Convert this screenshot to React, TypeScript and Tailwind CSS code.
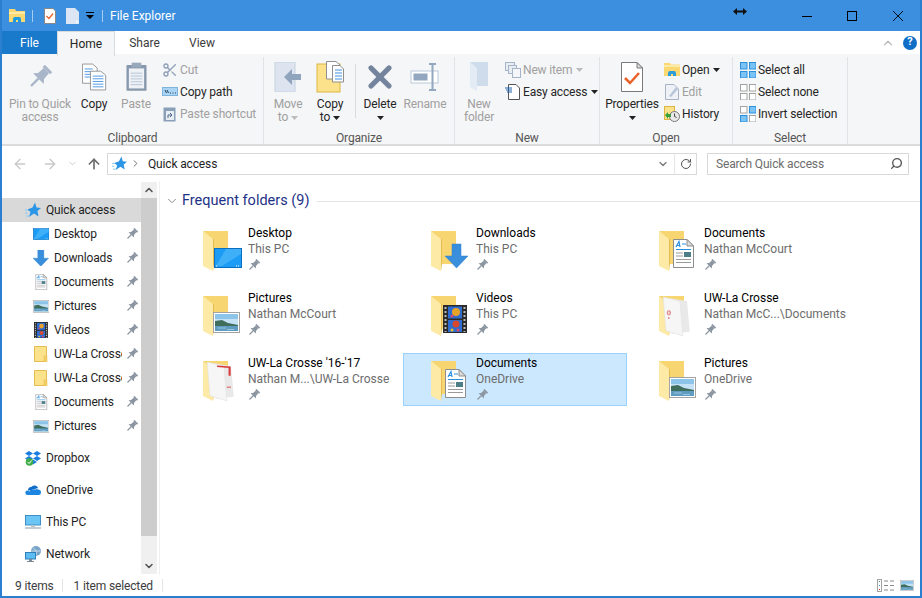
import { ArrowLeft, ArrowRight, ArrowUp, ChevronDown, ChevronUp, ChevronRight, RotateCw, Search, Scissors, X } from "lucide-react";
import type { ReactNode } from "react";

const Caret = ({ color = "#222" }: { color?: string }) => (
  <svg width="7" height="4" viewBox="0 0 7 4" className="inline-block shrink-0">
    <polygon points="0,0 7,0 3.5,4" fill={color} />
  </svg>
);

const Pin = ({ size = 12, color = "#8b96a1" }: { size?: number; color?: string }) => (
  <svg width={size} height={size} viewBox="0 0 16 16" className="shrink-0">
    <g transform="rotate(45 8 8)" fill={color}>
      <rect x="4.5" y="0" width="7" height="2" />
      <polygon points="5.6,2 10.4,2 10.8,7 13,9.5 3,9.5 5.2,7" />
      <rect x="7.2" y="9.5" width="1.6" height="7" />
    </g>
  </svg>
);

const Star = ({ size = 16 }: { size?: number }) => (
  <svg width={size} height={size} viewBox="0 0 16 16" className="shrink-0">
    <polygon points="10,0.5 11.5,5.5 16,6 12.5,9 13.5,14.5 9,11.5 4,15 5.5,10 2.5,7.5 7.5,5.5" fill="#2b95e6" />
    <path d="M0 8h3M0 11h2.5M1 14h3" stroke="#8cc8f2" strokeWidth="1" />
  </svg>
);

const DesktopGlyph = () => (
  <g>
    <rect x="0.5" y="0.5" width="27" height="19" fill="#1c9cf4" stroke="#0a6fc0" />
    <polygon points="12,1 27,1 27,6 8,18 2,18" fill="#3fb0f8" />
    <path d="M2 18h2M22 18h4" stroke="#fff" strokeWidth="1" strokeDasharray="1 1" />
  </g>
);

const ArrowGlyph = () => (
  <polygon points="7,0 16,0 16,12 23,12 11.5,24 0,12 7,12" fill="#3a8fdc" stroke="#2f7fca" strokeWidth="0.5" />
);

const PictureGlyph = () => (
  <g>
    <rect x="0.5" y="0.5" width="26" height="20" fill="#fff" stroke="#a3a3a3" />
    <rect x="2" y="2" width="23" height="17" fill="#c4e1f5" />
    <rect x="2" y="2" width="23" height="5" fill="#8cc4ea" />
    <path d="M2 9 L9 8 L15 11 L25 13 V15 H2Z" fill="#3f6e5c" />
    <rect x="2" y="14" width="23" height="5" fill="#5f9cc2" />
    <path d="M5 16h8M14 17.500h7" stroke="#a9cfe6" strokeWidth="0.8" />
  </g>
);

const VideoGlyph = () => (
  <g>
    <rect x="0" y="0" width="24" height="28" fill="#2a2a2a" />
    <rect x="5" y="1.5" width="14" height="12" fill="#2e6cd0" />
    <rect x="5" y="15" width="14" height="12" fill="#2e6cd0" />
    <circle cx="13" cy="7" r="4" fill="#e8a228" />
    <circle cx="9" cy="11" r="1.5" fill="#d9476a" />
    <circle cx="13" cy="19" r="3.5" fill="#d9472c" />
    <circle cx="9" cy="25" r="1.5" fill="#e8c028" />
    <circle cx="15" cy="25" r="1.5" fill="#d9476a" />
    <path d="M2.5 2v25M21.5 2v25" stroke="#bbb" strokeWidth="2" strokeDasharray="2 2" />
  </g>
);

const DocGlyph = () => (
  <g>
    <polygon points="0.5,0.5 14,0.5 20.5,7 20.5,28.5 0.5,28.5" fill="#fff" stroke="#8d8d8d" />
    <polygon points="14,0.5 14,7 20.5,7" fill="#dcdcdc" stroke="#8d8d8d" />
    <path d="M3 8 L6 2.5 L7 8 M3.5 6.500 h3" stroke="#2a8fe0" strokeWidth="1.2" fill="none" />
    <path d="M9 5h4M3 10.5h15" stroke="#2a8fe0" strokeWidth="1" />
    <path d="M3 14h7M3 17h7M3 20.5h15M3 23.5h15" stroke="#9a9a9a" strokeWidth="1" />
    <rect x="11" y="13" width="7" height="5" fill="#4d7d86" />
  </g>
);

const PaperGlyph = ({ faded = false }: { faded?: boolean }) => (
  <g transform="scale(1.4 1.05)">
    <polygon points="7,2 20,5 22,34 9,36" fill="#e9e9e9" />
    <polygon points="3,1 15,5 17,38 5,33" fill="#f6f6f6" stroke="#e2e2e2" strokeWidth="0.5" />
    {faded ? (
      <path d="M7 18 a1 2 0 1 1 0.1 0 M7 20v2" stroke="#e08a8a" strokeWidth="1" fill="none" />
    ) : (
      <>
        <path d="M10 5 L19 6 L19 14" stroke="#d83b3b" strokeWidth="1.5" fill="none" />
        <path d="M17 25h3" stroke="#e08a8a" strokeWidth="1.5" />
      </>
    )}
  </g>
);

// folder with the overlay that Explorer puts over it
const Folder = ({ children }: { children?: ReactNode }) => (
  <svg width="45" height="42" viewBox="0 0 45 42" className="shrink-0">
    <rect x="0" y="0" width="25" height="33" fill="#f7d672" />
    <polygon points="0,0 10,8 10,40 0,35" fill="#fdeaa6" />
    <polygon points="10,8 11,8 11,33 10,40" fill="#e5bb52" />
    {children}
  </svg>
);

const tiles: { name: string; sub: string; overlay: ReactNode; selected?: boolean }[] = [
  { name: "Desktop", sub: "This PC", overlay: <g transform="translate(11 17)"><DesktopGlyph /></g> },
  { name: "Downloads", sub: "This PC", overlay: <g transform="translate(14 13)"><ArrowGlyph /></g> },
  { name: "Documents", sub: "Nathan McCourt", overlay: <g transform="translate(14 8)"><DocGlyph /></g> },
  { name: "Pictures", sub: "Nathan McCourt", overlay: <g transform="translate(10 16)"><PictureGlyph /></g> },
  { name: "Videos", sub: "This PC", overlay: <g transform="translate(12 9)"><VideoGlyph /></g> },
  { name: "UW-La Crosse", sub: "Nathan McC...\\Documents", overlay: <PaperGlyph faded /> },
  { name: "UW-La Crosse '16-'17", sub: "Nathan M...\\UW-La Crosse", overlay: <PaperGlyph /> },
  { name: "Documents", sub: "OneDrive", overlay: <g transform="translate(14 8)"><DocGlyph /></g>, selected: true },
  { name: "Pictures", sub: "OneDrive", overlay: <g transform="translate(10 16)"><PictureGlyph /></g> },
];

const SmallIcon = ({ children }: { children: ReactNode }) => (
  <svg width="16" height="16" viewBox="0 0 16 16" className="shrink-0">
    {children}
  </svg>
);

const Note = () => (
  <SmallIcon>
    <polygon points="1.5,0.5 13.5,0.5 13.5,15.5 1.5,15.5" fill="#fde28c" stroke="#e3bd52" />
    <rect x="11" y="10" width="3" height="6" fill="#f3cf66" stroke="#e3bd52" strokeWidth="0.5" />
  </SmallIcon>
);

const navPinned: { name: string; icon: ReactNode }[] = [
  { name: "Desktop", icon: <SmallIcon><g transform="scale(0.58) translate(0 4)"><DesktopGlyph /></g></SmallIcon> },
  { name: "Downloads", icon: <SmallIcon><g transform="scale(0.68)"><ArrowGlyph /></g></SmallIcon> },
  { name: "Documents", icon: <SmallIcon><g transform="translate(2.5 0) scale(0.55)"><DocGlyph /></g></SmallIcon> },
  { name: "Pictures", icon: <SmallIcon><g transform="translate(0 2) scale(0.6)"><PictureGlyph /></g></SmallIcon> },
  { name: "Videos", icon: <SmallIcon><g transform="translate(1 0) scale(0.58)"><VideoGlyph /></g></SmallIcon> },
  { name: "UW-La Crosse", icon: <Note /> },
  { name: "UW-La Crosse", icon: <Note /> },
  { name: "Documents", icon: <SmallIcon><g transform="translate(2.5 0) scale(0.55)"><DocGlyph /></g></SmallIcon> },
  { name: "Pictures", icon: <SmallIcon><g transform="translate(0 2) scale(0.6)"><PictureGlyph /></g></SmallIcon> },
];

const navRoots: { name: string; icon: ReactNode }[] = [
  {
    name: "Dropbox",
    icon: (
      <SmallIcon>
        <path d="M4 1L8 3.5L4 6L0 3.5ZM12 1L16 3.5L12 6L8 3.5ZM4 6L8 8.5L4 11L0 8.5ZM12 6L16 8.5L12 11L8 8.5ZM8 9.5L12 12L8 14.5L4 12Z" fill="#1b7de0" />
        <circle cx="4.5" cy="12" r="3.8" fill="#3fae49" />
        <path d="M2.6 12l1.5 1.5 2.5-3" stroke="#fff" strokeWidth="1" fill="none" />
      </SmallIcon>
    ),
  },
  {
    name: "OneDrive",
    icon: (
      <SmallIcon>
        <path d="M3 8.5a3 3 0 0 1 3.2-3.4A4 4 0 0 1 13.3 6.5 2.8 2.8 0 0 0 10 7.5 3 3 0 0 0 6 9.5 2.6 2.6 0 0 0 3 8.5Z" fill="#0f6cc8" />
        <path d="M2.5 13a2.2 2.2 0 0 1 0-4.4c.9 0 1.8.3 2.6 1A3 3 0 0 1 10 8a2.5 2.5 0 0 1 3-.6 2.8 2.8 0 0 1 3 3A2.6 2.6 0 0 1 13.500 13Z" fill="#1c86e0" />
      </SmallIcon>
    ),
  },
  {
    name: "This PC",
    icon: (
      <SmallIcon>
        <rect x="0.500" y="1.500" width="15" height="9.500" fill="#6cc6f5" stroke="#3f8fc7" />
        <rect x="6" y="11" width="4" height="2" fill="#b9c4cc" />
        <rect x="0" y="13" width="16" height="2" fill="#c2ccd2" />
      </SmallIcon>
    ),
  },
  {
    name: "Network",
    icon: (
      <SmallIcon>
        <circle cx="11" cy="5" r="5" fill="#7aa5c9" />
        <path d="M8 2c2 1 4 3 3 7M6.500 5h9" stroke="#dbe9f3" strokeWidth="0.8" fill="none" />
        <rect x="0.500" y="6.500" width="10" height="6.500" fill="#5dbcf2" stroke="#2f7fb8" />
        <rect x="4" y="13" width="3" height="2" fill="#7c8b95" />
        <rect x="2" y="15" width="7" height="1" fill="#7c8b95" />
      </SmallIcon>
    ),
  },
];

const Large = ({ w, lines, icon, disabled = false, caret = false }: { w: number; lines: string[]; icon: ReactNode; disabled?: boolean; caret?: boolean }) => (
  <div style={{ width: w }} className={`flex flex-col items-center shrink-0 leading-[13px] ${disabled ? "text-[#a0a0a0]" : "text-[#262626]"}`}>
    <div className="h-[39px] pb-[4px] flex items-center justify-center">{icon}</div>
    {lines.map((line, i) => (
      <div key={line} className="whitespace-nowrap h-[13px] flex items-center gap-[3px]">
        {line}
        {caret && i === lines.length - 1 && lines.length > 1 && <Caret color={disabled ? "#bbb" : "#222"} />}
      </div>
    ))}
    {caret && lines.length === 1 && <div className="h-[13px] flex items-center"><Caret /></div>}
  </div>
);

const Small = ({ icon, label, disabled = false, caret = false }: { icon: ReactNode; label: string; disabled?: boolean; caret?: boolean }) => (
  <div className={`h-[22px] flex items-center whitespace-nowrap ${disabled ? "text-[#a0a0a0]" : "text-[#262626]"}`}>
    <span className="w-[18px] shrink-0">{icon}</span>
    {label}
    {caret && <span className="ml-[4px] flex"><Caret color={disabled ? "#bbb" : "#222"} /></span>}
  </div>
);

const Group = ({ w, label, children }: { w: number; label: string; children: ReactNode }) => (
  <div style={{ width: w }} className="h-[88px] shrink-0 border-r border-[#e1e3e6] flex flex-col">
    <div className="flex h-[70px] pt-[2px]">{children}</div>
    <div className="mt-auto h-[16px] leading-[18px] text-center text-[#555]">{label}</div>
  </div>
);

const LargeCopy = () => (
  <svg width="25" height="30" viewBox="0 0 28 30">
    <polygon points="0.5,0.5 12,0.5 17,5 17,22 0.5,22" fill="#fff" stroke="#8f8f8f" />
    <path d="M3 6h9M3 9h11M3 12h11M3 15h11" stroke="#3f8fe0" />
    <polygon points="9.500,8.500 21,8.500 26.500,13 26.500,29.500 9.500,29.500" fill="#fff" stroke="#8f8f8f" />
    <path d="M12 14h12M12 17h12M12 20h12M12 23h12M12 26h12" stroke="#3f8fe0" />
  </svg>
);

const Grid4 = ({ fills, strokes }: { fills: string[]; strokes: string[] }) => (
  <SmallIcon>
    {[[0, 0], [9, 0], [0, 9], [9, 9]].map(([x, y], i) => (
      <rect key={i} x={x + 0.5} y={y + 0.5} width="6.500" height="6.500" fill={fills[i]} stroke={strokes[i]} />
    ))}
  </SmallIcon>
);

const History = () => (
  <SmallIcon>
    <rect x="0.500" y="0.500" width="10" height="13" fill="#fde28c" stroke="#dcb545" />
    <circle cx="10.500" cy="10.500" r="5" fill="#e8e8e8" stroke="#777" />
    <path d="M10.500 7.500v3l2 1" stroke="#444" fill="none" />
    <path d="M1 9l3-3v2h3v3H4v2Z" fill="#3aa13a" />
  </SmallIcon>
);

const OpenFolder = () => (
  <SmallIcon>
    <path d="M0 1h6l1 1.500h9V14H0Z" fill="#fbd970" />
    <rect x="0" y="3" width="16" height="2" fill="#fdeaa6" />
    <path d="M4 14v-3a2 2 0 0 1 2-2h4a2 2 0 0 1 2 2v3h-3v-2H7v2Z" fill="#2d9cdb" />
  </SmallIcon>
);

const Ribbon = () => (
  <div className="h-[92px] bg-[#f5f6f7] border-b-2 border-[#dadbdc] flex pt-[3px] shrink-0 tracking-[-0.15px]">
    <Group w={262} label="Clipboard">
      <div className="w-[3px] shrink-0" />
      <Large w={70} lines={["Pin to Quick", "access"]} disabled icon={<Pin size={24} color="#a9b6ca" />} />
      <Large w={38} lines={["Copy"]} icon={<LargeCopy />} />
      <Large w={46} lines={["Paste"]} disabled icon={
        <svg width="21" height="30" viewBox="0 0 22 30">
          <rect x="0.500" y="2.500" width="21" height="27" rx="1" fill="#8797ad" />
          <rect x="3" y="6" width="16" height="21" fill="#eef1f5" />
          <path d="M5 11h12M5 14h12M5 17h12M5 20h12M5 23h12" stroke="#b6c3d6" />
          <rect x="6" y="0" width="10" height="5" fill="#9aa8bb" />
        </svg>
      } />
      <div className="w-[3px] shrink-0" />
      <div className="flex flex-col">
        <Small disabled label="Cut" icon={<Scissors size={16} color="#8fa0ba" />} />
        <Small label="Copy path" icon={
          <SmallIcon>
            <rect x="0.500" y="3.500" width="15" height="8" fill="#a9d4f3" stroke="#7fb5dc" />
            <path d="M3 6l1.500 3M5 6l1.500 3M8 9h1M10.500 9h1M13 9h1" stroke="#24425e" />
          </SmallIcon>
        } />
        <Small disabled label="Paste shortcut" icon={
          <SmallIcon>
            <rect x="1.500" y="1.500" width="12" height="14" fill="#8aa0b8" />
            <rect x="4" y="5" width="8" height="9" fill="#e8edf3" />
            <path d="M6 12v-3h4M8 7l2 2-2 2" stroke="#4c6888" fill="none" />
          </SmallIcon>
        } />
      </div>
    </Group>
    <Group w={191} label="Organize">
      <div className="w-[6px] shrink-0" />
      <Large w={36} lines={["Move", "to"]} caret disabled icon={
        <svg width="28" height="30" viewBox="0 0 28 30">
          <rect x="1" y="0" width="20" height="30" fill="#dde4ef" stroke="#c5d0e0" />
          <polygon points="10,15 18,7 18,12 27,12 27,18 18,18 18,23" fill="#90a4bd" />
        </svg>
      } />
      <div className="w-[4px] shrink-0" />
      <Large w={40} lines={["Copy", "to"]} caret icon={
        <svg width="28" height="32" viewBox="0 0 28 32">
          <rect x="1" y="3" width="23" height="28" fill="#fde28c" stroke="#dcb545" />
          <polygon points="10.500,0.500 20,0.500 24,4 24,18 10.500,18" fill="#fff" stroke="#8f8f8f" />
          <polygon points="16.500,4.500 24,4.500 27.500,8 27.500,21 16.500,21" fill="#fff" stroke="#8f8f8f" />
          <path d="M19 9h7M19 12h7M19 15h7M19 18h7" stroke="#3f8fe0" />
        </svg>
      } />
      <div className="w-[6px] shrink-0 flex flex-col items-start pt-[5px]">
        <div className="h-[54px] ml-[5px] w-px bg-[#dadbdc]" />
      </div>
      <div className="w-[4px] shrink-0" />
      <Large w={40} lines={["Delete"]} caret icon={<X size={36} color="#73849c" strokeWidth={3.5} />} />
      <div className="w-[4px] shrink-0" />
      <Large w={42} lines={["Rename"]} disabled icon={
        <svg width="30" height="28" viewBox="0 0 30 28">
          <rect x="1" y="8" width="27" height="12" fill="#fff" stroke="#b9c8da" />
          <rect x="3.500" y="10.500" width="14" height="7" fill="#93a7c1" />
          <path d="M19 1h7M22.500 1v26M19 27h7" stroke="#93a7c1" strokeWidth="2" />
        </svg>
      } />
    </Group>
    <Group w={145} label="New">
      <div className="w-[5px] shrink-0" />
      <Large w={38} lines={["New", "folder"]} disabled icon={
        <svg width="20" height="30" viewBox="0 0 20 30">
          <rect x="1" y="0" width="18" height="24" fill="#cfdcec" />
          <polygon points="1,0 8,6 8,29 1,25" fill="#e3ebf5" />
        </svg>
      } />
      <div className="w-[7px] shrink-0" />
      <div className="flex flex-col">
        <Small disabled caret label="New item" icon={
          <SmallIcon>
            <rect x="0.500" y="0.500" width="9" height="8" fill="#e8edf3" stroke="#a7b4c8" />
            <rect x="3.500" y="3.500" width="8" height="8" fill="#e8edf3" stroke="#a7b4c8" />
            <rect x="7.500" y="6.500" width="8" height="9" fill="#f4f6f9" stroke="#a7b4c8" />
          </SmallIcon>
        } />
        <Small caret label="Easy access" icon={
          <SmallIcon>
            <polygon points="3.500,0.500 11,0.500 14.500,4 14.500,15.500 3.500,15.500" fill="#fff" stroke="#555" />
            <path d="M0 4h7M1 6h6M2 8h5" stroke="#1e66b0" />
          </SmallIcon>
        } />
      </div>
    </Group>
    <Group w={133} label="Open">
      <div className="w-[5px] shrink-0" />
      <Large w={54} lines={["Properties"]} caret icon={
        <svg width="22" height="30" viewBox="0 0 22 30">
          <polygon points="0.500,0.500 16,0.500 21.500,6 21.500,29.500 0.500,29.500" fill="#fff" stroke="#7a7a7a" />
          <polygon points="16,0.500 16,6 21.500,6" fill="#ddd" stroke="#7a7a7a" />
          <path d="M4 16l5 5 9-10" stroke="#e8622a" strokeWidth="2.500" fill="none" />
        </svg>
      } />
      <div className="w-[5px] shrink-0" />
      <div className="flex flex-col">
        <Small caret label="Open" icon={<OpenFolder />} />
        <Small disabled label="Edit" icon={
          <SmallIcon>
            <polygon points="1.500,0.500 10,0.500 14.500,5 14.500,15.500 1.500,15.500" fill="#eef2f7" stroke="#a7b4c8" />
            <path d="M5 12L12 3l2 2-7 8Z" fill="#b7c6da" />
          </SmallIcon>
        } />
        <Small label="History" icon={<History />} />
      </div>
    </Group>
    <Group w={115} label="Select">
      <div className="w-[7px] shrink-0" />
      <div className="flex flex-col">
        <Small label="Select all" icon={<Grid4 fills={["#7cc3f5", "#7cc3f5", "#7cc3f5", "#7cc3f5"]} strokes={["#2b8fdc", "#2b8fdc", "#2b8fdc", "#2b8fdc"]} />} />
        <Small label="Select none" icon={<Grid4 fills={["#fff", "#fff", "#fff", "#fff"]} strokes={["#a3a3a3", "#a3a3a3", "#a3a3a3", "#a3a3a3"]} />} />
        <Small label="Invert selection" icon={<Grid4 fills={["#fff", "#7cc3f5", "#7cc3f5", "#fff"]} strokes={["#a3a3a3", "#2b8fdc", "#2b8fdc", "#a3a3a3"]} />} />
      </div>
    </Group>
  </div>
);

const App = () => {
  return (
    <div className="relative w-[922px] h-[598px] flex flex-col bg-white border-x-2 border-b-2 border-[#2b7fd0] text-[12px] font-['Roboto','Liberation_Sans',sans-serif] overflow-hidden">
      <div className="h-[31px] bg-[#3c8fde] flex items-center text-white shrink-0">
        <div className="ml-[7px] flex items-center">
          <SmallIcon>
            <path d="M0 1h6l1 2h9v11H0Z" fill="#fbd970" />
            <rect x="0" y="4" width="16" height="2" fill="#fdeaa6" />
            <path d="M4 14v-3a2 2 0 0 1 2-2h4a2 2 0 0 1 2 2v3h-3v-2H7v2Z" fill="#1e9be0" />
          </SmallIcon>
        </div>
        <div className="ml-[7px] w-px h-[12px] bg-[#a5cdf2]" />
        <div className="ml-[11px]">
          <svg width="12" height="16" viewBox="0 0 12 16" className="block">
            <polygon points="0.500,0.500 9,0.500 11.500,3 11.500,15.500 0.500,15.500" fill="#fff" stroke="#888" />
            <path d="M2.500 8l2.500 2.500 4-5" stroke="#e8622a" strokeWidth="1.300" fill="none" />
          </svg>
        </div>
        <div className="ml-[10px]">
          <svg width="13" height="16" viewBox="0 0 13 16" className="block">
            <polygon points="0,0 9,0 13,4 13,16 0,16" fill="#dbe5f3" />
            <polygon points="10,13 13,13 10,16" fill="#f5f8fc" />
          </svg>
        </div>
        <div className="ml-[7px]">
          <svg width="8" height="8" viewBox="0 0 8 8" className="block">
            <rect x="0" y="0" width="8" height="1" fill="#000" />
            <polygon points="0,3 8,3 4,7" fill="#000" />
          </svg>
        </div>
        <div className="ml-[8px] w-px h-[12px] bg-[#a5cdf2]" />
        <div className="ml-[7px] text-[12px]">File Explorer</div>
        <div className="ml-auto flex items-center">
          <div className="w-[45px] flex justify-center">
            <svg width="10" height="10" viewBox="0 0 10 10"><path d="M0 5.500h10" stroke="#000" /></svg>
          </div>
          <div className="w-[46px] flex justify-center">
            <svg width="10" height="10" viewBox="0 0 10 10"><rect x="0.500" y="0.500" width="9" height="9" fill="none" stroke="#000" /></svg>
          </div>
          <div className="w-[45px] flex justify-center">
            <svg width="10" height="10" viewBox="0 0 10 10"><path d="M0 0l10 10M10 0L0 10" stroke="#000" strokeWidth="0.9" /></svg>
          </div>
        </div>
      </div>

      <div className="h-[23px] flex items-stretch shrink-0 text-[#3c3c3c]">
        <div className="w-[55px] bg-[#1979ca] text-white flex items-center justify-center">File</div>
        <div className="w-[58px] bg-[#f5f6f7] border-x border-t border-[#dadbdc] -mb-[2px] z-10 flex items-center justify-center text-[#262626]">Home</div>
        <div className="w-[58px] pl-px flex items-center justify-center">Share</div>
        <div className="w-[58px] flex items-center justify-center">View</div>
        <div className="ml-auto flex items-center">
          <ChevronUp size={14} color="#b8b8b8" />
          <div className="ml-[8px] mr-[3px] w-[14px] h-[14px] rounded-full bg-[#0f6fc6] text-white font-bold text-[11px] flex items-center justify-center">?</div>
        </div>
      </div>

      <Ribbon />

      <div className="h-[35px] flex items-center shrink-0">
        <ArrowLeft size={16} color="#c9c9c9" className="ml-[10px]" />
        <ArrowRight size={16} color="#c9c9c9" className="ml-[14px]" />
        <ChevronDown size={11} color="#c9c9c9" className="ml-[9px]" />
        <ArrowUp size={16} color="#6d6d6d" strokeWidth={2.500} className="ml-[8px]" />
        <div className="ml-[5px] w-[590px] h-[22px] border border-[#d9d9d9] flex items-center">
          <span className="ml-[4px]"><Star size={15} /></span>
          <ChevronRight size={11} color="#666" className="ml-[3px]" />
          <span className="ml-[7px] text-[#1f1f1f] tracking-[-0.15px]">Quick access</span>
          <ChevronDown size={12} color="#777" strokeWidth={2.500} className="ml-auto mr-[5px]" />
          <div className="w-[22px] h-full border-l border-[#e6e6e6] flex items-center justify-center">
            <RotateCw size={12} color="#555" />
          </div>
        </div>
        <div className="ml-[10px] w-[202px] h-[22px] border border-[#d9d9d9] flex items-center pl-[8px] text-[#6d6d6d] tracking-[-0.15px]">
          Search Quick access
          <Search size={13} color="#555" strokeWidth={2.500} className="ml-auto mr-[5px] -scale-x-100" />
        </div>
      </div>

      <div className="flex-1 min-h-0 flex">
        <div className="w-[139px] pt-[17px] shrink-0 overflow-hidden text-[#1f1f1f] tracking-[-0.15px]">
          <div className="h-6 bg-[#d9d9d9] flex items-center pl-[23px] gap-[5px]">
            <Star />
            Quick access
          </div>
          {navPinned.map((row, i) => (
            <div key={i} className="h-6 flex items-center pl-[31px] gap-[5px]">
              {row.icon}
              <span className="w-[68px] overflow-hidden whitespace-nowrap">{row.name}</span>
              <span className="-ml-[1px] flex"><Pin /></span>
            </div>
          ))}
          {navRoots.map((row) => (
            <div key={row.name} className="h-6 mt-2 flex items-center pl-[23px] gap-[5px]">
              {row.icon}
              {row.name}
            </div>
          ))}
        </div>
        <div className="w-[16px] shrink-0 bg-[#f0f0f0] flex flex-col h-[392px] mt-px">
          <div className="h-[16px] flex items-center justify-center"><ChevronUp size={12} strokeWidth={3} color="#505050" /></div>
          <div className="h-[338px] bg-[#cdcdcd]" />
          <div className="mt-auto h-[16px] flex items-center justify-center"><ChevronDown size={12} strokeWidth={3} color="#505050" /></div>
        </div>
        <div className="w-[3px] shrink-0 border-r border-[#f0f0f0]" />
        <div className="flex-1 min-w-0 pl-[15px] pt-[10px]">
          <div className="h-[20px] -ml-[10px] flex items-center">
            <ChevronDown size={14} color="#7a7a7a" strokeWidth={1.500} />
            <span className="ml-[3px] text-[14.5px] text-[#1e3287] whitespace-nowrap">Frequent folders (9)</span>
            <div className="ml-[8px] flex-1 h-px bg-[#e5e5e5]" />
          </div>
          <div className="mt-[12px] grid grid-cols-[224px_224px_224px] gap-x-1 gap-y-3">
            {tiles.map((tile) => (
              <div key={tile.name + tile.sub} className={`h-[53px] border flex pl-[27px] pt-[2px] ${tile.selected ? "bg-[#cce8ff] border-[#99d1ff]" : "border-transparent"}`}>
                <div className="mt-[5px] h-[42px]"><Folder>{tile.overlay}</Folder></div>
                <div className="leading-[15px]">
                  <div className="text-black whitespace-nowrap">{tile.name}</div>
                  <div className="text-[#6d6d6d] whitespace-nowrap mt-px">{tile.sub}</div>
                  <div className="mt-[2px]"><Pin /></div>
                </div>
              </div>
            ))}
          </div>
        </div>
      </div>

      <div className="h-[21px] flex items-center shrink-0 text-[#3c3c3c] tracking-[-0.15px]">
        <span className="ml-[13px]">9 items</span>
        <div className="ml-[8px] w-px h-[13px] bg-[#e5e5e5]" />
        <span className="ml-[11px]">1 item selected</span>
        <div className="ml-[9px] w-px h-[13px] bg-[#e5e5e5]" />
        <div className="ml-auto mr-[6px] flex items-center gap-[5px]">
          <svg width="18" height="13" viewBox="0 0 18 13">
            <rect x="0.500" y="0.500" width="4" height="12" fill="#fff" stroke="#a3a3a3" />
            <rect x="2" y="2" width="1" height="1" fill="#3b8f6a" />
            <rect x="2" y="6" width="1" height="1" fill="#3f8fe0" />
            <rect x="2" y="10" width="1" height="1" fill="#d83b3b" />
            <path d="M7 2h4M13 2h4M7 6.500h4M13 6.500h4M7 11h4M13 11h4" stroke="#8a8a8a" />
          </svg>
          <svg width="14" height="11" viewBox="0 0 27 21"><PictureGlyph /></svg>
        </div>
      </div>

      <svg width="14" height="7" viewBox="0 0 14 7" className="absolute left-[731px] top-[8px]">
        <path d="M0 3.500L4 0v2.500h6V0l4 3.500L10 7V4.500H4V7Z" fill="#111" />
      </svg>
    </div>
  );
};

export default App;
